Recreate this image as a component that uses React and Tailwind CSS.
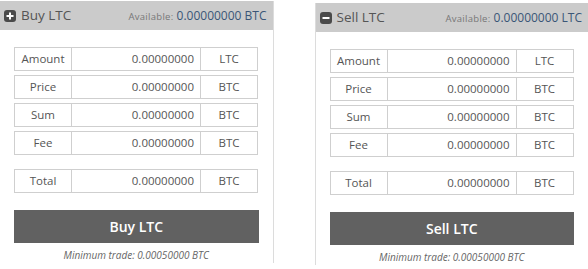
import React from "react";

const rows = [
  { label: "Amount", unit: "LTC" },
  { label: "Price", unit: "BTC" },
  { label: "Sum", unit: "BTC" },
  { label: "Fee", unit: "BTC" },
];

const Row = ({ label, value, unit }) => (
  <div className="flex h-[24px] text-[11.5px] text-[#555]">
    <div className="w-[58px] border border-[#cfcfcf] flex items-center justify-center">
      {label}
    </div>
    <div className="w-[128px] border-y border-[#cfcfcf] flex items-center justify-end pr-[6px]">
      {value}
    </div>
    <div className="w-[58px] border border-[#cfcfcf] flex items-center justify-center">
      {unit}
    </div>
  </div>
);

const TradePanel = ({ type, available, className }) => {
  const isBuy = type === "Buy";
  return (
    <div className={`flex flex-col w-[274px] h-[262px] ${className}`}>
      {/* Header */}
      <div className="flex items-center justify-between h-[29px] bg-[#cbcbcb] pl-[4px] pr-[6px]">
        <div className="flex items-center gap-[5px]">
          <div className="w-[12px] h-[12px] rounded-[3px] bg-[#4a4a4a] flex items-center justify-center">
            <svg width="8" height="8" viewBox="0 0 8 8">
              <rect x="0.5" y="3" width="7" height="2" fill="#fff" />
              {isBuy && <rect x="3" y="0.5" width="2" height="7" fill="#fff" />}
            </svg>
          </div>
          <span className="text-[13.5px] text-[#555]">{type} LTC</span>
        </div>
        <div className="flex items-baseline gap-[3px]">
          <span className="text-[9.5px] text-[#777] tracking-[0.3px]">Available:</span>
          <span className="text-[12px] text-[#3a5677]">{available}</span>
        </div>
      </div>

      {/* Form */}
      <div className="flex flex-col px-[14px] pt-[17px]">
        <div className="flex flex-col gap-[4px]">
          {rows.map((r) => (
            <Row key={r.label} label={r.label} value="0.00000000" unit={r.unit} />
          ))}
        </div>
        <div className="mt-[14px]">
          <Row label="Total" value="0.00000000" unit="BTC" />
        </div>
        <button className="mt-[17px] h-[33px] w-full bg-[#616161] text-white text-[14px] font-semibold">
          {type} LTC
        </button>
        <div className="mt-[5px] text-center italic text-[10px] text-[#666]">
          Minimum trade: 0.00050000 BTC
        </div>
      </div>
    </div>
  );
};

const App = () => {
  return (
    <div
      className="w-[588px] h-[269px] bg-white flex gap-[41px] overflow-hidden"
      style={{ fontFamily: '"Open Sans", sans-serif' }}
    >
      <TradePanel
        type="Buy"
        available="0.00000000 BTC"
        className="mt-[1px] border-r border-[#dcdcdc] w-[273px]"
      />
      <TradePanel
        type="Sell"
        available="0.00000000 LTC"
        className="mt-[3px] border-l border-[#dcdcdc]"
      />
    </div>
  );
};

export default App;
